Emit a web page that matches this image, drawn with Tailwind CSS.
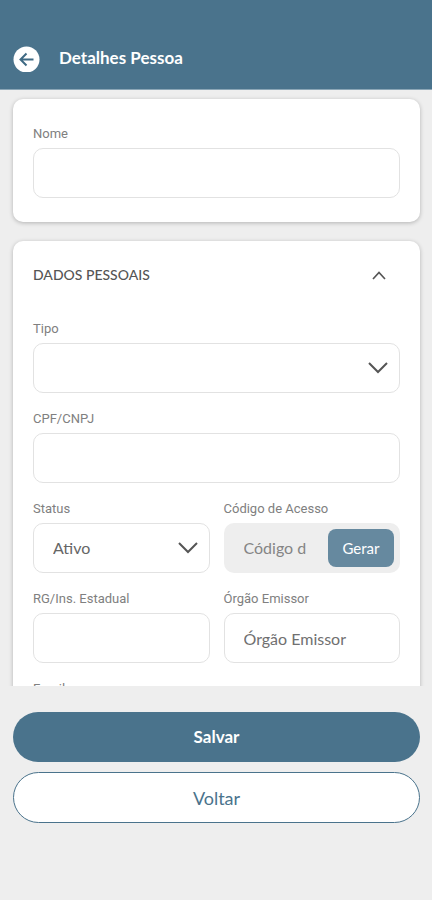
<!DOCTYPE html>
<html lang="pt-BR">
<head>
    <meta charset="UTF-8">
    <meta name="viewport" content="width=device-width, initial-scale=1.0">
    <title>Detalhes Pessoa</title>
    <!-- Tailwind CSS CDN -->
    <script src="https://cdn.jsdelivr.net/npm/@tailwindcss/browser@4"></script>
</head>
<body class="h-screen flex flex-col bg-[#eeeeee] font-[Lato,sans-serif] text-[#666666]">

    <!-- Header -->
    <header class="shrink-0 bg-[#4a738c] border-b border-[#8ba6b6] pt-11 pb-[17px] px-3 flex items-center gap-[19px]">
        <button type="button" aria-label="Voltar para a lista" class="w-7 h-7 rounded-full">
            <svg class="w-7 h-7" viewBox="0 0 28 28" fill="none">
                <circle cx="14.5" cy="15.5" r="13" fill="#ffffff"/>
                <path d="M21.5 15.5H8.5M14.5 9.5L8.5 15.5L14.5 21.5" stroke="#3f6a84" stroke-width="2"/>
            </svg>
        </button>
        <h1 class="text-[17px] leading-7 font-bold text-white">Detalhes Pessoa</h1>
    </header>

    <!-- Form -->
    <main class="flex-1 min-h-0 overflow-y-auto [scrollbar-width:none] pl-[13px] pr-3 pt-[9px]">
        <form id="pessoaForm">
            <section class="bg-white rounded-[10px] shadow-[0_1px_4px_rgba(0,0,0,0.25)] px-5 pt-[25px] pb-6">
                <label for="nome" class="block font-[Roboto,sans-serif] text-[13px] leading-5 text-[#808080] mb-1">Nome</label>
                <input id="nome" type="text" class="block w-full h-[50px] px-5 rounded-[10px] border border-[#e2e2e2] text-base">
            </section>

            <section class="mt-[19px] bg-white rounded-[10px] shadow-[0_1px_4px_rgba(0,0,0,0.25)] px-5 pt-6 pb-6">
                <button type="button" id="toggleDados" aria-expanded="true" aria-controls="dadosPessoais" class="w-full flex items-center justify-between pr-[13px] text-left">
                    <span class="text-sm leading-5 font-medium text-[#555555]">DADOS PESSOAIS</span>
                    <svg class="w-4 h-4" viewBox="0 0 16 16" fill="none" stroke="#555555" stroke-width="1.7">
                        <path d="M2 12L8 5.5L14 12"/>
                    </svg>
                </button>

                <div id="dadosPessoais" class="mt-[34px] grid grid-cols-2 gap-x-[14px] gap-y-4">
                    <div class="col-span-2">
                        <label for="tipo" class="block font-[Roboto,sans-serif] text-[13px] leading-5 text-[#808080] mb-1">Tipo</label>
                        <div class="relative">
                            <select id="tipo" class="block w-full h-[50px] px-5 rounded-[10px] border border-[#e2e2e2] bg-white appearance-none text-base">
                                <option></option>
                            </select>
                            <svg class="absolute right-3 top-4 w-5 h-5 pointer-events-none" viewBox="0 0 20 20" fill="none" stroke="#555555" stroke-width="2">
                                <path d="M1 4L10 13L19 4"/>
                            </svg>
                        </div>
                    </div>

                    <div class="col-span-2">
                        <label for="cpfCnpj" class="block font-[Roboto,sans-serif] text-[13px] leading-5 text-[#808080] mb-1">CPF/CNPJ</label>
                        <input id="cpfCnpj" type="text" class="block w-full h-[50px] px-5 rounded-[10px] border border-[#e2e2e2] text-base">
                    </div>

                    <div>
                        <label for="status" class="block font-[Roboto,sans-serif] text-[13px] leading-5 text-[#808080] mb-1">Status</label>
                        <div class="relative">
                            <select id="status" class="block w-full h-[50px] px-[19px] rounded-[10px] border border-[#e2e2e2] bg-white appearance-none text-base">
                                <option>Ativo</option>
                            </select>
                            <svg class="absolute right-3 top-4 w-5 h-5 pointer-events-none" viewBox="0 0 20 20" fill="none" stroke="#555555" stroke-width="2">
                                <path d="M1 4L10 13L19 4"/>
                            </svg>
                        </div>
                    </div>

                    <div>
                        <label for="codigoAcesso" class="block font-[Roboto,sans-serif] text-[13px] leading-5 text-[#808080] mb-1">Código de Acesso</label>
                        <div class="flex items-center h-[50px] pl-5 pr-[6px] rounded-[10px] bg-[#eeeeee]">
                            <input id="codigoAcesso" type="text" readonly placeholder="Código de Acesso" class="w-[62px] min-w-0 mr-auto text-base placeholder:text-[#858585]">
                            <button type="button" class="shrink-0 w-[66px] h-[38px] rounded-lg bg-[#66899f] text-[15px] text-white">Gerar</button>
                        </div>
                    </div>

                    <div>
                        <label for="rg" class="block font-[Roboto,sans-serif] text-[13px] leading-5 text-[#808080] mb-1">RG/Ins. Estadual</label>
                        <input id="rg" type="text" class="block w-full h-[50px] px-[19px] rounded-[10px] border border-[#e2e2e2] text-base">
                    </div>

                    <div>
                        <label for="orgaoEmissor" class="block font-[Roboto,sans-serif] text-[13px] leading-5 text-[#808080] mb-1">Órgão Emissor</label>
                        <input id="orgaoEmissor" type="text" placeholder="Órgão Emissor" class="block w-full h-[50px] px-[19px] rounded-[10px] border border-[#e2e2e2] text-base placeholder:text-[#707070]">
                    </div>

                    <div class="col-span-2">
                        <label for="email" class="block font-[Roboto,sans-serif] text-[13px] leading-5 text-[#808080] mb-1">Email</label>
                        <input id="email" type="email" class="block w-full h-[50px] px-5 rounded-[10px] border border-[#e2e2e2] text-base">
                    </div>
                </div>
            </section>
        </form>
    </main>

    <!-- Actions -->
    <footer class="shrink-0 pl-[13px] pr-3 pt-[26px] pb-[77px] flex flex-col gap-[10px]">
        <button type="submit" form="pessoaForm" class="h-[50px] rounded-full bg-[#4a738c] text-[17px] font-bold text-white">Salvar</button>
        <button type="button" class="h-[51px] rounded-full bg-white border border-[#4a738c] text-lg text-[#4a738c]">Voltar</button>
    </footer>

    <script>
        // Collapse / expand the personal data section
        const toggleDados = document.getElementById('toggleDados');
        const dadosPessoais = document.getElementById('dadosPessoais');

        toggleDados.addEventListener('click', () => {
            const hidden = dadosPessoais.classList.toggle('hidden');
            toggleDados.setAttribute('aria-expanded', String(!hidden));
        });
    </script>
</body>
</html>
